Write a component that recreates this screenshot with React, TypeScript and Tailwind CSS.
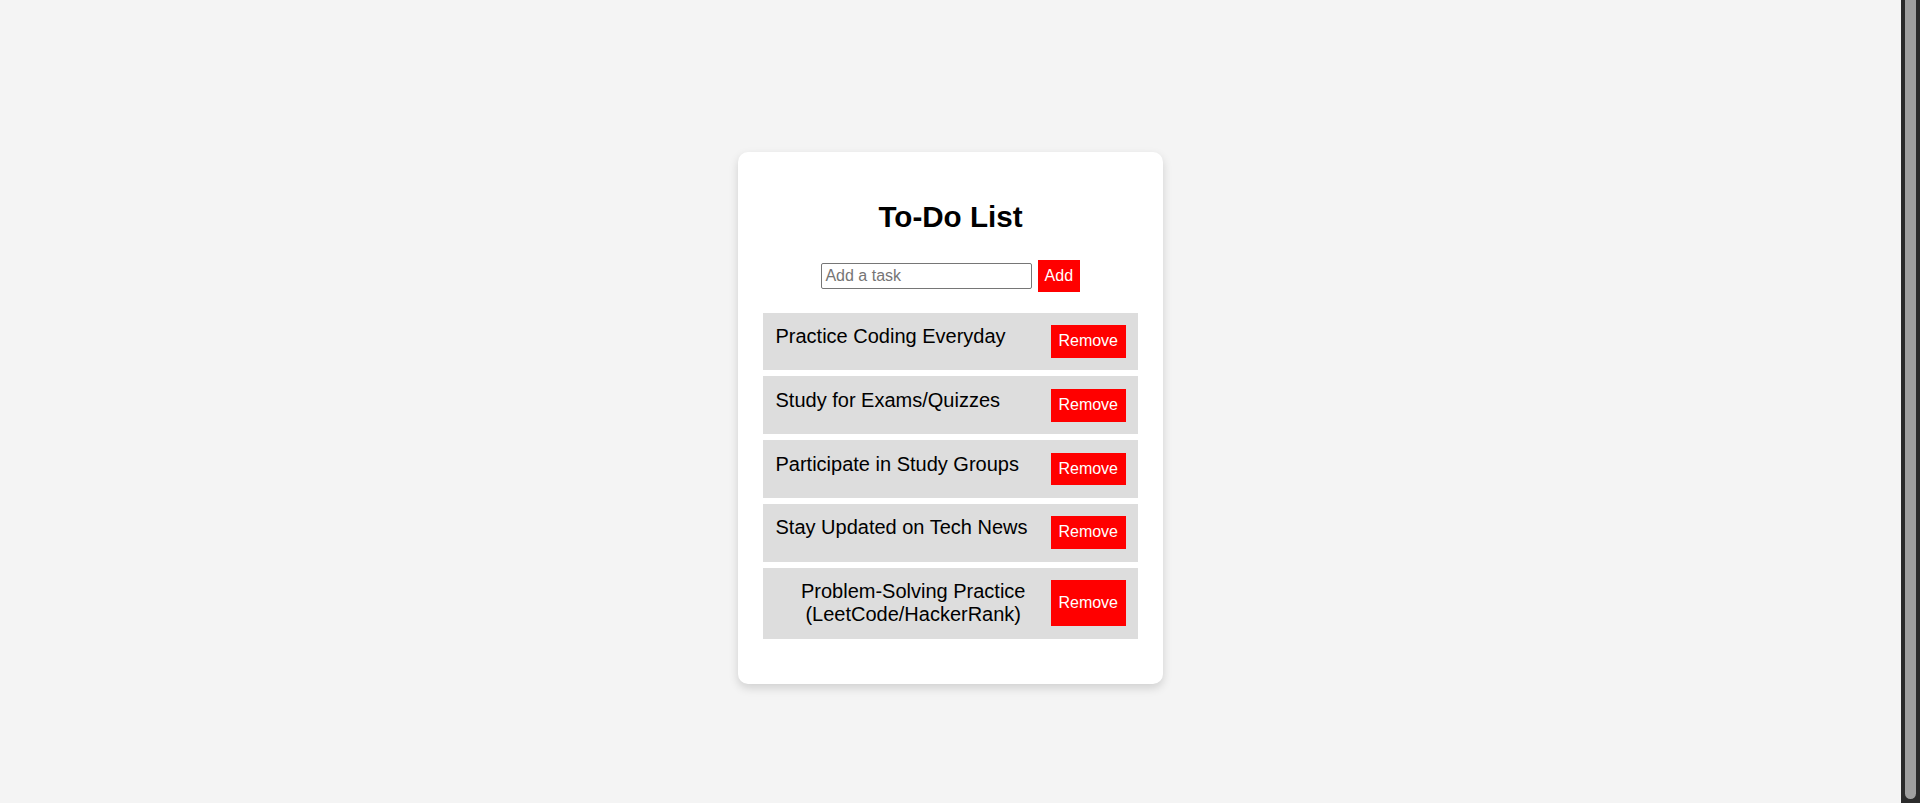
import { useState } from "react";

const initialTasks = [
  "Practice Coding Everyday",
  "Study for Exams/Quizzes",
  "Participate in Study Groups",
  "Stay Updated on Tech News",
  "Problem-Solving Practice (LeetCode/HackerRank)",
];

export default function App() {
  const [tasks, setTasks] = useState<string[]>(initialTasks);
  const [input, setInput] = useState("");

  const addTask = () => {
    if (!input.trim()) return;
    setTasks([...tasks, input.trim()]);
    setInput("");
  };

  return (
    <div className="flex h-screen overflow-hidden bg-[#f4f4f4] font-['Liberation_Sans',Arial,sans-serif] leading-[normal] text-black">
      {/* Page */}
      <main className="flex flex-1 items-center justify-center pt-[32.4px]">
        <div className="w-[425px] rounded-[10px] bg-white px-[25px] pt-[48.3px] pb-[45.2px] text-center shadow-[0_4px_10px_rgba(0,0,0,0.15)]">
          <h1 className="text-[29.6px] font-bold leading-[normal]">To-Do List</h1>

          <div className="mt-[25.7px] flex items-center justify-center gap-[5.7px]">
            <input
              type="text"
              value={input}
              onChange={(e) => setInput(e.target.value)}
              placeholder="Add a task"
              className="h-[26px] w-[211px] rounded-[2px] border border-[#767676] bg-white px-[3px] text-[16px] leading-[normal] placeholder:text-[#757575]"
            />
            <button
              onClick={addTask}
              className="bg-[#ff0000] px-[6.5px] py-[7px] text-[16px] leading-[18.7px] text-white"
            >
              Add
            </button>
          </div>

          <ul className="mt-[20.3px] flex flex-col gap-[6.05px]">
            {tasks.map((task, i) => (
              <li
                key={i}
                className="flex justify-between bg-[#dddddd] p-[12.5px] text-[20px] leading-[23px]"
              >
                <span>{task}</span>
                <button
                  onClick={() => setTasks(tasks.filter((_, j) => j !== i))}
                  className="bg-[#ff0000] px-[7.5px] py-[7px] text-[16px] leading-[18.7px] text-white"
                >
                  Remove
                </button>
              </li>
            ))}
          </ul>
        </div>
      </main>

      {/* Scrollbar */}
      <div className="w-[19px] bg-[#2b2b2b] px-[4px]">
        <div className="h-[799px] rounded-b-[6px] bg-[#9f9f9f]" />
      </div>
    </div>
  );
}
